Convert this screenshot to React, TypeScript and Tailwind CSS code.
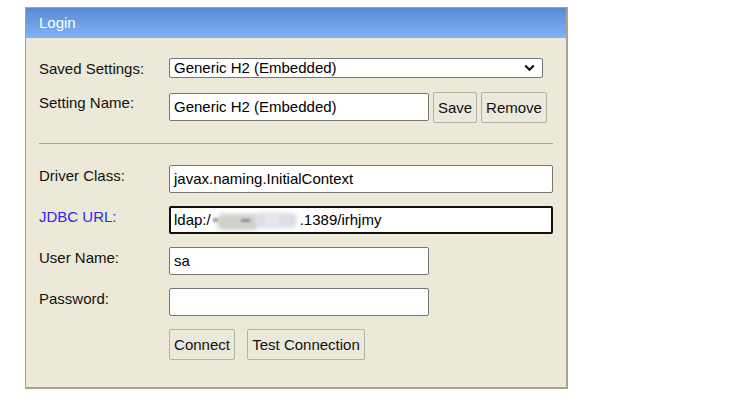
import { ReactNode } from "react";

const font = "font-['Liberation_Sans',Arial,sans-serif]";

function Label({ children, blue = false }: { children: ReactNode; blue?: boolean }) {
  return (
    <div
      className={`w-[130px] shrink-0 pt-[2px] leading-[18px] text-[15px] ${
        blue ? "text-[#2a2af0]" : "text-[#111]"
      }`}
    >
      {children}
    </div>
  );
}

function TextBox({
  value,
  width,
  focused = false,
  children,
}: {
  value?: string;
  width: string;
  focused?: boolean;
  children?: ReactNode;
}) {
  return (
    <div
      className={`${width} h-[28px] bg-white rounded-[2px] flex items-center pt-[1px] text-[15px] text-black whitespace-nowrap overflow-hidden ${
        focused
          ? "border-2 border-[#101010] pl-[3px]"
          : "border border-[#767676] pl-[4px]"
      }`}
    >
      {children ?? value}
    </div>
  );
}

function Btn({ label, width }: { label: string; width: string }) {
  return (
    <button
      className={`${width} h-[31px] shrink-0 rounded-[2px] border border-[#b3b0a4] bg-[#ebe8dc] pt-[2px] text-[15px] text-[#111] flex items-center justify-center`}
    >
      {label}
    </button>
  );
}

export default function App() {
  return (
    <div className={`min-h-screen bg-white pt-[7px] pl-[25px] ${font}`}>
      <div className="w-[543px] h-[382px] bg-[#ece9d8] border-[#a7a496] border-l border-t border-r-2 border-b-2">
        {/* title bar */}
        <div className="h-[30px] bg-gradient-to-b from-[#5a88d6] to-[#7fb4f3] flex items-center pl-[13px] pt-[1px] text-white text-[15px]">
          Login
        </div>

        <div className="pl-[13px] pt-[20px]">
          {/* saved settings */}
          <div className="flex items-start">
            <Label>Saved Settings:</Label>
            <div className="w-[374px] h-[20px] bg-white border border-[#767676] rounded-[2px] flex items-center justify-between pl-[4px] pr-[7px] text-[15px] text-black">
              <span>Generic H2 (Embedded)</span>
              <svg width="11" height="8" viewBox="0 0 11 8" aria-hidden>
                <polyline
                  points="1.2,1.5 5.5,5.8 9.8,1.5"
                  fill="none"
                  stroke="#111"
                  strokeWidth="2.2"
                />
              </svg>
            </div>
          </div>

          {/* setting name */}
          <div className="flex items-start mt-[14px]">
            <Label>Setting Name:</Label>
            <div className="mt-[1px]">
              <TextBox value="Generic H2 (Embedded)" width="w-[260px]" />
            </div>
            <div className="flex gap-[4px] ml-[4px]">
              <Btn label="Save" width="w-[44px]" />
              <Btn label="Remove" width="w-[66px]" />
            </div>
          </div>

          <div className="mt-[20px] w-[514px] h-px bg-[#a3a3a3]" />

          {/* connection fields */}
          <div className="mt-[21px] flex flex-col gap-[13px]">
            <div className="flex items-start">
              <Label>Driver Class:</Label>
              <TextBox value="javax.naming.InitialContext" width="w-[384px]" />
            </div>
            <div className="flex items-start">
              <Label blue>JDBC URL:</Label>
              <TextBox width="w-[384px]" focused>
                <span>ldap:/</span>
                <span className="inline-block w-[89px] h-[18px] relative">
                  <span className="absolute left-[2px] top-[6px] w-[6px] h-[4px] bg-[#9a9a9a] blur-[1px]" />
                  <span className="absolute left-[6px] top-[2px] w-[42px] h-[16px] rounded-[6px] bg-[#cfcfcb] blur-[2px]" />
                  <span className="absolute left-[30px] top-[7px] w-[9px] h-[3px] bg-[#8f8f8f] blur-[1px]" />
                  <span className="absolute left-[44px] top-[1px] w-[42px] h-[15px] rounded-[6px] bg-[#dcdce6] blur-[2px]" />
                  <span className="absolute left-[54px] top-[2px] w-[14px] h-[12px] bg-[#e6e6ee] blur-[1px]" />
                </span>
                <span>.1389/irhjmy</span>
              </TextBox>
            </div>
            <div className="flex items-start">
              <Label>User Name:</Label>
              <TextBox value="sa" width="w-[260px]" />
            </div>
            <div className="flex items-start">
              <Label>Password:</Label>
              <TextBox value="" width="w-[260px]" />
            </div>
            <div className="flex items-start">
              <div className="w-[130px] shrink-0" />
              <div className="flex gap-[12px]">
                <Btn label="Connect" width="w-[66px]" />
                <Btn label="Test Connection" width="w-[118px]" />
              </div>
            </div>
          </div>
        </div>
      </div>
    </div>
  );
}
